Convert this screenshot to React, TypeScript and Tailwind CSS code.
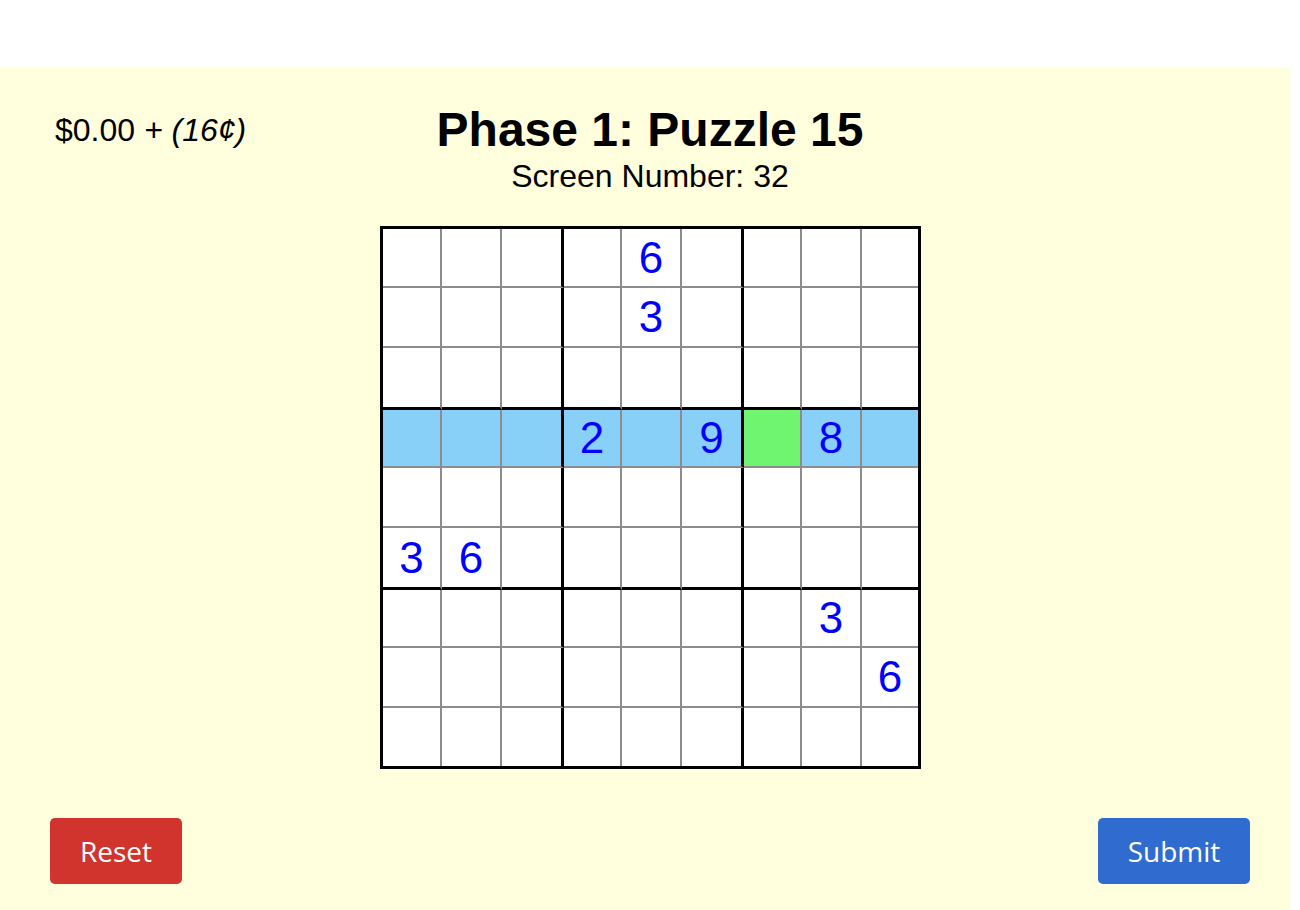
import React from "react";

const givens: Record<string, number> = {
  "0-4": 6,
  "1-4": 3,
  "3-3": 2,
  "3-5": 9,
  "3-7": 8,
  "5-0": 3,
  "5-1": 6,
  "6-7": 3,
  "7-8": 6,
};

const activeRow = 3;
const activeCol = 6;

function Cell({ r, c }: { r: number; c: number }) {
  const v = givens[`${r}-${c}`];
  const right =
    c === 8 ? "" : c === 2 || c === 5 ? "border-r-[3px] border-r-black" : "border-r-2 border-r-[#8c8c8c]";
  const bottom =
    r === 8 ? "" : r === 2 || r === 5 ? "border-b-[3px] border-b-black" : "border-b-2 border-b-[#8c8c8c]";
  let bg = "bg-white";
  if (r === activeRow) bg = c === activeCol ? "bg-[#70f570]" : "bg-[#88d0f8]";
  return (
    <div className={`${right} ${bottom} ${bg} flex items-center justify-center text-[44px] leading-none text-[#0000ff]`}>
      {v ?? ""}
    </div>
  );
}

export default function App() {
  const cells = [];
  for (let r = 0; r < 9; r++) for (let c = 0; c < 9; c++) cells.push(<Cell key={`${r}-${c}`} r={r} c={c} />);

  return (
    <div className="min-h-screen bg-white" style={{ fontFamily: '"Liberation Sans", Arial, sans-serif' }}>
      <div className="h-[68px]" />
      <div className="bg-[#ffffdd] w-[1290px] h-[842px]">
        <div className="w-[1300px] flex flex-col">
          <div className="grid grid-cols-[1fr_auto_1fr]">
            <div className="pl-[55px] pt-[46px] text-[32px] leading-none text-black">
              $0.00 <span className="italic">+ (16¢)</span>
            </div>
            <div className="flex flex-col items-center pt-[38px]">
              <h1 className="text-[48px] leading-none font-bold text-black">Phase 1: Puzzle 15</h1>
              <div className="mt-[6px] text-[32px] leading-none text-black">Screen Number: 32</div>
            </div>
            <div />
          </div>

          <div className="mt-[34px] flex justify-center">
            <div className="ml-[1px] border-[3px] border-black grid grid-cols-[59px_60px_62px_58px_60px_62px_58px_60px_56px] grid-rows-[59px_60px_62px_58px_60px_62px_58px_60px_58px]">
              {cells}
            </div>
          </div>

          <div className="mt-[49px] flex justify-between pl-[50px] pr-[50px]" style={{ fontFamily: '"Open Sans", "Noto Sans", sans-serif' }}>
            <button className="h-[66px] px-[30px] rounded-[5px] bg-[#d0342c] text-white text-[28px] leading-none">
              Reset
            </button>
            <button className="h-[66px] w-[152px] rounded-[5px] bg-[#306ccf] text-white text-[28px] leading-none">
              Submit
            </button>
          </div>
        </div>
      </div>
    </div>
  );
}
